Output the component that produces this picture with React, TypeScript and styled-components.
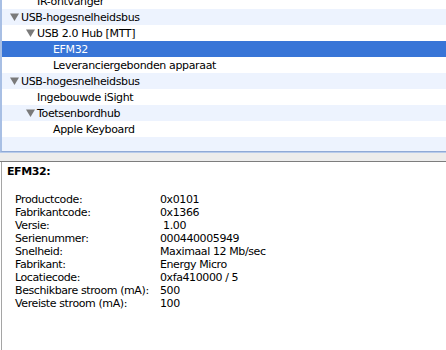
import React from 'react'
import styled, { createGlobalStyle } from 'styled-components'

const GlobalStyle = createGlobalStyle`
  html, body {
    margin: 0;
    padding: 0;
    background: #ffffff;
  }
  body {
    font-family: 'DejaVu Sans', 'Liberation Sans', sans-serif;
    font-size: 11px;
    color: #000000;
  }
`

const Window = styled.div`
  display: flex;
  flex-direction: column;
  width: 446px;
  height: 350px;
  overflow: hidden;
`

const TreePane = styled.div`
  height: 151px;
  overflow: hidden;
  border-left: 2px solid #a8bfe4;
  border-bottom: 1px solid #8fa9d6;
  box-shadow: 0 1px 0 #b8cbea;
`

const TreeList = styled.ul`
  list-style: none;
  margin: -7px 0 0 0;
  padding: 0;
`

const Row = styled.li<{ $striped: boolean; $selected?: boolean; $level: number }>`
  display: flex;
  align-items: center;
  height: 16px;
  padding-left: ${(p) => 8 + p.$level * 16}px;
  background: ${(p) => (p.$selected ? '#3875d7' : p.$striped ? '#edf3fe' : '#ffffff')};
  color: ${(p) => (p.$selected ? '#ffffff' : '#000000')};
  white-space: nowrap;
`

const Toggle = styled.span`
  display: flex;
  align-items: center;
  width: 11px;
  height: 16px;
  flex-shrink: 0;
`

const Label = styled.span`
  line-height: 16px;
  padding-top: 1px;
  letter-spacing: -0.35px;
`

const Splitter = styled.div`
  height: 8px;
  margin-top: 1px;
  background: #ececec;
  border-bottom: 1px solid #7d7d7d;
`

const DetailPane = styled.div`
  flex: 1;
  border-left: 1px solid #a5a5a5;
  margin-left: 1px;
  padding: 3px 0 0 5px;
  line-height: 13px;
  letter-spacing: -0.4px;
`

const Title = styled.div`
  font-weight: bold;
`

const Props = styled.dl`
  display: grid;
  grid-template-columns: 145px auto;
  margin: 15px 0 0 8px;
`

const Key = styled.dt`
  margin: 0;
`

const Value = styled.dd`
  margin: 0;
  white-space: pre;
`

const Triangle = () => (
  <svg width="9" height="8" viewBox="0 0 9 8">
    <polygon points="0,0.5 9,0.5 4.5,8" fill="#7a7a7a" />
  </svg>
)

type Node = { label: string; level: number; open?: boolean; selected?: boolean }

const nodes: Node[] = [
  { label: 'IR-ontvanger', level: 1 },
  { label: 'USB-hogesnelheidsbus', level: 0, open: true },
  { label: 'USB 2.0 Hub [MTT]', level: 1, open: true },
  { label: 'EFM32', level: 2, selected: true },
  { label: 'Leveranciergebonden apparaat', level: 2 },
  { label: 'USB-hogesnelheidsbus', level: 0, open: true },
  { label: 'Ingebouwde iSight', level: 1 },
  { label: 'Toetsenbordhub', level: 1, open: true },
  { label: 'Apple Keyboard', level: 2 },
  { label: '', level: 0 },
  { label: '', level: 0 },
]

const details: [string, string][] = [
  ['Productcode:', '0x0101'],
  ['Fabrikantcode:', '0x1366'],
  ['Versie:', ' 1.00'],
  ['Serienummer:', '000440005949'],
  ['Snelheid:', 'Maximaal 12 Mb/sec'],
  ['Fabrikant:', 'Energy Micro'],
  ['Locatiecode:', '0xfa410000 / 5'],
  ['Beschikbare stroom (mA):', '500'],
  ['Vereiste stroom (mA):', '100'],
]

export default function App() {
  return (
    <>
      <GlobalStyle />
      <Window>
        <TreePane>
          <TreeList>
            {nodes.map((n, i) => (
              <Row key={i} $level={n.level} $striped={i % 2 === 1} $selected={n.selected}>
                <Toggle>{n.open && <Triangle />}</Toggle>
                <Label>{n.label}</Label>
              </Row>
            ))}
          </TreeList>
        </TreePane>
        <Splitter />
        <DetailPane>
          <Title>EFM32:</Title>
          <Props>
            {details.map(([k, v]) => (
              <React.Fragment key={k}>
                <Key>{k}</Key>
                <Value>{v}</Value>
              </React.Fragment>
            ))}
          </Props>
        </DetailPane>
      </Window>
    </>
  )
}
